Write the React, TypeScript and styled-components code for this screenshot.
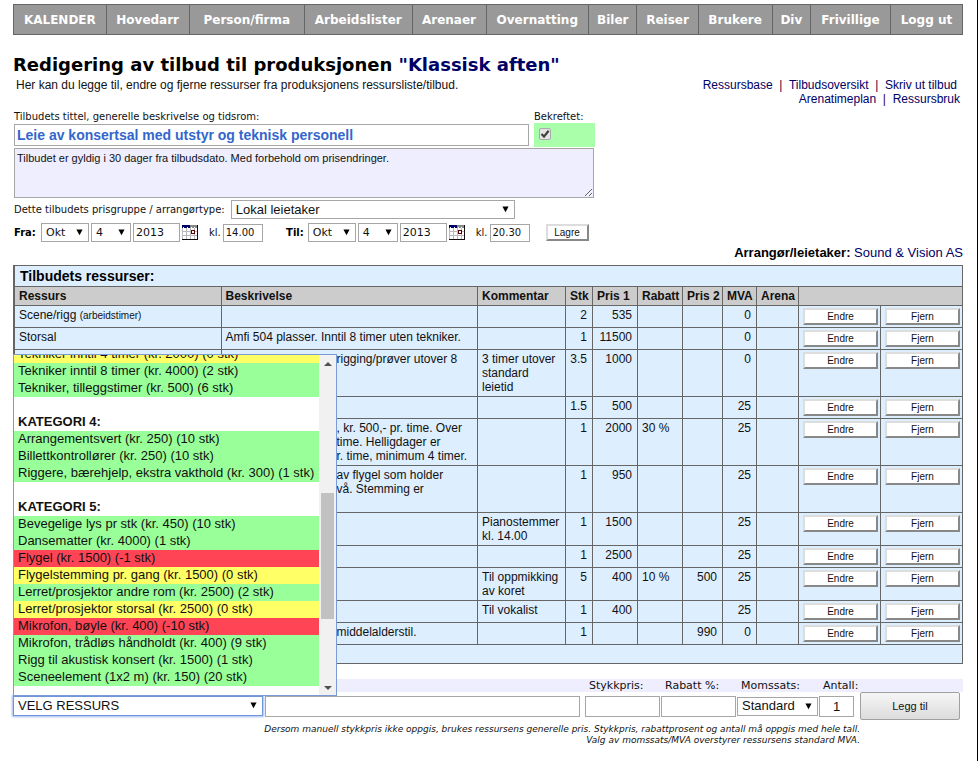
import React from "react";
import styled, { createGlobalStyle, css } from "styled-components";

const SANS = '"Liberation Sans", Arial, sans-serif';
const WIDE = '"DejaVu Sans", Verdana, sans-serif';
const LINE = "#666666";

const GlobalStyle = createGlobalStyle`
  *, *::before, *::after { box-sizing: border-box; }
  html { min-height: 100%; border-right: 1px solid #000; background: #fff; }
  body { margin: 0; font: 12px/14px ${SANS}; color: #111; }
  a { color: #000066; text-decoration: none; }
  input, select, textarea, button { margin: 0; color: #111; border-radius: 0; }
`;

const Page = styled.div`
  padding: 4px 14px 12px 13px;
`;

const Nav = styled.nav`
  display: flex;
  height: 31px;
  border: 1px solid ${LINE};
  background: #999999;
`;

const NavLink = styled.a<{ $share: number }>`
  flex: ${(p) => p.$share} 1 0;
  display: flex;
  align-items: center;
  justify-content: center;
  min-width: 0;
  font: bold 12px/16px ${WIDE};
  color: #fff;
  white-space: nowrap;
  & + & { border-left: 1px solid ${LINE}; }
`;

const Title = styled.h1`
  margin: 18px 0 0;
  font: bold 18px/24px ${WIDE};
  color: #000;
  span { color: #000066; }
`;

const Intro = styled.div`
  display: flex;
  justify-content: space-between;
  padding: 1px 3px 0;
`;

const IntroText = styled.p`
  margin: 0;
`;

const Links = styled.div`
  display: flex;
  flex-direction: column;
  align-items: flex-end;
  color: #330044;
  white-space: pre;
`;

const LinkRow = styled.div<{ $inset?: boolean }>`
  padding-right: ${(p) => (p.$inset ? "3px" : "0")};
`;

const Offer = styled.form`
  padding: 4px 0 0 1px;
`;

const Small = styled.label`
  font: 10px/13px ${WIDE};
  color: #111;
`;

const TitleRow = styled.div`
  display: flex;
  gap: 5px;
`;

const TitleField = styled.div`
  display: flex;
  flex-direction: column;
  width: 515px;
`;

const Confirmed = styled.div`
  display: flex;
  flex-direction: column;
  width: 61px;
`;

const ConfirmedBox = styled.div`
  display: flex;
  height: 24px;
  padding: 5px;
  background: #aaffaa;
`;

const Tick = styled.input`
  appearance: none;
  width: 12px;
  height: 12px;
  border: 1px solid #aaa;
  border-radius: 2px;
  background: #e4e4e4
    url("data:image/svg+xml,%3Csvg xmlns='http://www.w3.org/2000/svg' viewBox='0 0 10 10'%3E%3Cpath d='M1.5 5l2.5 2.6L8.6 1.8' fill='none' stroke='%23404040' stroke-width='2.2'/%3E%3C/svg%3E")
    center / 10px 10px no-repeat;
  &:not(:checked) { background-image: none; }
`;

const field = css`
  border: 1px solid #a6a6a6;
  background: #fff;
  padding: 0 2px;
`;

const TitleInput = styled.input`
  ${field}
  height: 22px;
  margin-top: 1px;
  font: bold 14px/18px ${SANS};
  color: #3366cc;
`;

const Description = styled.textarea`
  ${field}
  display: block;
  width: 580px;
  height: 50px;
  margin-top: 1px;
  background: #eeeeff;
  font: 11px/14px ${SANS};
  padding: 2px;
`;

const FormRow = styled.div`
  display: flex;
  align-items: center;
  margin-top: 2px;
`;

const SelectFrame = styled.div<{ $w: number; $focus?: boolean }>`
  position: relative;
  display: flex;
  width: ${(p) => p.$w}px;
  height: ${(p) => (p.$focus ? 20 : 19)}px;
  border: 1px solid ${(p) => (p.$focus ? "#6f95d8" : "#a6a6a6")};
  box-shadow: ${(p) => (p.$focus ? "0 0 2px 1px #9dbcf0" : "none")};
  background: #fff;
  > svg {
    position: absolute;
    right: 5px;
    top: 5px;
    pointer-events: none;
  }
`;

const Select = styled.select<{ $wide?: boolean }>`
  appearance: none;
  flex: 1;
  min-width: 0;
  border: 0;
  outline: 0;
  padding: 0 4px;
  background: transparent;
  font: ${(p) => (p.$wide ? `11px/16px ${WIDE}` : `13px/16px ${SANS}`)};
`;

const GroupSelect = styled.div`
  margin-left: 6px;
`;

const DateRow = styled.div`
  display: flex;
  align-items: center;
  gap: 2px;
  margin-top: 4px;
  font: 10px/14px ${WIDE};
`;

const DateName = styled.span<{ $w: number }>`
  width: ${(p) => p.$w}px;
  padding-right: 2px;
  font-weight: bold;
  color: #000;
  white-space: nowrap;
  text-align: ${(p) => (p.$w > 30 ? "right" : "left")};
`;

const YearInput = styled.input`
  ${field}
  width: 47px;
  height: 19px;
  font: 11px/15px ${WIDE};
`;

const TimeInput = styled.input`
  ${field}
  width: 40px;
  height: 18px;
  font: 10px/14px ${WIDE};
`;

const TimeName = styled.label`
  padding-left: 9px;
`;

const PlainButton = styled.button`
  display: block;
  width: 100%;
  height: 17px;
  padding: 0;
  border: 2px solid;
  border-color: #dddddd #888888 #888888 #dddddd;
  background: #fff;
  font: 10px/13px ${SANS};
`;

const SaveSlot = styled.div`
  width: 43px;
  margin-left: 14px;
`;

const CalendarButton = styled.button`
  display: flex;
  padding: 0;
  border: 0;
  background: none;
  width: 16px;
  height: 16px;
`;

const Organiser = styled.p`
  margin: 3px 0 4px;
  text-align: right;
  font-size: 13px;
  line-height: 16px;
  b { color: #000; }
`;

const Resources = styled.table`
  width: 100%;
  table-layout: fixed;
  border-collapse: collapse;
  border: 1px solid ${LINE};
  border-left-width: 2px;
  background: #ddeeff;
  td, th {
    border: 1px solid ${LINE};
    padding: 2px 3px 2px 4px;
    text-align: left;
    vertical-align: top;
  }
`;

const Caption = styled.th`
  && {
    height: 21px;
    padding-left: 5px;
    font-size: 14px;
    line-height: 16px;
    color: #000;
  }
`;

const HeadRow = styled.tr`
  background: #cccccc;
  th { height: 19px; white-space: nowrap; padding-right: 0; }
`;

const NumCell = styled.td`
  && { text-align: right; padding-left: 0; padding-right: 5px; }
`;

const ActionCell = styled.td`
  && { padding: 2px; padding-left: 4px; }
`;

const FootCell = styled.td`
  && { height: 19px; }
`;

const Tiny = styled.small`
  font-size: 10px;
`;

const Lead = styled.span`
  display: inline-block;
  width: 111px;
  height: 14px;
  overflow: hidden;
  vertical-align: top;
  white-space: pre;
  text-align: right;
`;

const AddForm = styled.form`
  margin-top: 15px;
`;

const columns = css`
  display: grid;
  grid-template-columns: 251px minmax(0, 1fr) 3px 75px 75px 81px 35px 105px;
  column-gap: 1px;
  padding-right: 3px;
`;

const AddLabels = styled.div`
  ${columns}
  height: 13px;
  background: #eeeeff;
  font: 11px/13px ${WIDE};
  label { white-space: nowrap; padding-left: 4px; }
`;

const AddFields = styled.div`
  ${columns}
  align-items: center;
  height: 27px;
`;

const AddInput = styled.input<{ $gap?: boolean }>`
  ${field}
  width: 100%;
  height: 21px;
  font: 13px/17px ${SANS};
  text-align: ${(p) => (p.$gap ? "center" : "left")};
`;

const AddButton = styled.button`
  height: 28px;
  margin: 0 0 0 5px;
  border: 1px solid #a0a0a0;
  border-radius: 2px;
  background: linear-gradient(#f6f6f6, #dcdcdc);
  font: 11px/14px ${SANS};
`;

const Picker = styled.div`
  position: relative;
`;

const Menu = styled.div`
  position: absolute;
  left: 0;
  bottom: 100%;
  z-index: 2;
  display: flex;
  width: 324px;
  height: 342px;
  border: 1px solid #7a9bd8;
  background: #fff;
`;

const Options = styled.ul`
  flex: 1;
  display: flex;
  flex-direction: column;
  justify-content: flex-end;
  min-width: 0;
  margin: 0;
  padding: 0 0 9px;
  overflow: hidden;
  list-style: none;
`;

const tones = { ok: "#99ff99", out: "#ffff66", over: "#ff4455", none: "#ffffff" };
type Tone = keyof typeof tones;

const Option = styled.li<{ $tone: Tone }>`
  flex: none;
  height: 17px;
  padding-left: 4px;
  background: ${(p) => tones[p.$tone]};
  font-size: 13px;
  line-height: 16px;
  font-weight: ${(p) => (p.$tone === "none" ? "bold" : "normal")};
  white-space: nowrap;
`;

const ScrollTrack = styled.div`
  display: flex;
  flex-direction: column;
  align-items: center;
  width: 17px;
  padding: 7px 1px 5px;
  background: #f1f1f1;
`;

const ScrollSpace = styled.div<{ $share: number; $thumb?: boolean }>`
  flex: ${(p) => p.$share} 1 0;
  width: 13px;
  background: ${(p) => (p.$thumb ? "#c1c1c1" : "transparent")};
`;

const Hints = styled.p`
  width: 847px;
  max-width: 100%;
  margin: 5px 0 0;
  text-align: right;
  font: italic 9px/11px ${WIDE};
`;

const Arrow = () => (
  <svg width="7" height="7" viewBox="0 0 8 8" aria-hidden="true">
    <path d="M0.5 0.5h7L4 7z" fill="#000" />
  </svg>
);

const ScrollArrow = ({ down }: { down?: boolean }) => (
  <svg width="8" height="4" viewBox="0 0 8 4" aria-hidden="true">
    <path d={down ? "M0 0h8L4 4z" : "M0 4h8L4 0z"} fill="#505050" />
  </svg>
);

const CalendarIcon = () => (
  <svg width="16" height="16" viewBox="0 0 16 16" shapeRendering="crispEdges" aria-hidden="true">
    <path d="M0 0h16v15H0z" fill="#fff" />
    <path d="M0.5 2v12M4.5 2v12M8.5 2v12M12.5 2v12M0 6.5h15M0 10.5h15" stroke="#bbb" fill="none" />
    <path d="M0 0h8v3H0z" fill="#000066" />
    <path d="M8 0h7v3H8z" fill="#888" />
    <path d="M1 2h1v1H1zM5 2h1v1H5zM9 2h1v1H9zM12 2h1v1h-1z" fill="#fff" />
    <path d="M9.5 5.5h3v3h-3z" fill="#fff" stroke="#660000" />
    <path d="M0 14.5h16M15.5 0v15" stroke="#111" fill="none" />
  </svg>
);

const menuItems: [string, number][] = [
  ["KALENDER", 93], ["Hovedarr", 83], ["Person/firma", 116], ["Arbeidslister", 108],
  ["Arenaer", 74], ["Overnatting", 103], ["Biler", 48], ["Reiser", 61],
  ["Brukere", 74], ["Div", 38], ["Frivillige", 80], ["Logg ut", 72],
];

const options: [string, Tone][] = [
  ["Tekniker inntil 4 timer (kr. 2000) (0 stk)", "out"],
  ["Tekniker inntil 8 timer (kr. 4000) (2 stk)", "ok"],
  ["Tekniker, tilleggstimer (kr. 500) (6 stk)", "ok"],
  ["", "none"],
  ["KATEGORI 4:", "none"],
  ["Arrangementsvert (kr. 250) (10 stk)", "ok"],
  ["Billettkontrollører (kr. 250) (10 stk)", "ok"],
  ["Riggere, bærehjelp, ekstra vakthold (kr. 300) (1 stk)", "ok"],
  ["", "none"],
  ["KATEGORI 5:", "none"],
  ["Bevegelige lys pr stk (kr. 450) (10 stk)", "ok"],
  ["Dansematter (kr. 4000) (1 stk)", "ok"],
  ["Flygel (kr. 1500) (-1 stk)", "over"],
  ["Flygelstemming pr. gang (kr. 1500) (0 stk)", "out"],
  ["Lerret/prosjektor andre rom (kr. 2500) (2 stk)", "ok"],
  ["Lerret/prosjektor storsal (kr. 2500) (0 stk)", "out"],
  ["Mikrofon, bøyle (kr. 400) (-10 stk)", "over"],
  ["Mikrofon, trådløs håndholdt (kr. 400) (9 stk)", "ok"],
  ["Rigg til akustisk konsert (kr. 1500) (1 stk)", "ok"],
  ["Sceneelement (1x2 m) (kr. 150) (20 stk)", "ok"],
];

type Line = [lead: string, rest: string];
type Row = {
  name?: string; note?: string; text?: string; lines?: Line[]; comment?: string;
  qty: string; p1?: string; off?: string; p2?: string; vat: string;
};

const rows: Row[] = [
  { name: "Scene/rigg", note: "(arbeidstimer)", qty: "2", p1: "535", vat: "0" },
  { name: "Storsal", text: "Amfi 504 plasser. Inntil 8 timer uten tekniker.", qty: "1", p1: "11500", vat: "0" },
  { lines: [["", "rigging/prøver utover 8"]], comment: "3 timer utover standard leietid", qty: "3.5", p1: "1000", vat: "0" },
  { qty: "1.5", p1: "500", vat: "25" },
  { lines: [["timer", ", kr. 500,- pr. time. Over"], ["pr. ", "time. Helligdager er"], ["p", "r. time, minimum 4 timer."]], qty: "1", p1: "2000", off: "30 %", vat: "25" },
  { lines: [["", "av flygel som holder"], ["ni", "vå. Stemming er"], ["", " "]], qty: "1", p1: "950", vat: "25" },
  { comment: "Pianostemmer kl. 14.00", qty: "1", p1: "1500", vat: "25" },
  { qty: "1", p1: "2500", vat: "25" },
  { comment: "Til oppmikking av koret", qty: "5", p1: "400", off: "10 %", p2: "500", vat: "25" },
  { comment: "Til vokalist", qty: "1", p1: "400", vat: "25" },
  { lines: [["i ", "middelalderstil."]], qty: "1", p2: "990", vat: "0" },
];

function DateFields({ id, name, time, w }: { id: string; name: string; time: string; w: number }) {
  return (
    <>
      <DateName $w={w}>{name}</DateName>
      <SelectFrame $w={48}>
        <Select $wide aria-label={`${name} måned`}><option>Okt</option></Select>
        <Arrow />
      </SelectFrame>
      <SelectFrame $w={40}>
        <Select $wide aria-label={`${name} dag`}><option>4</option></Select>
        <Arrow />
      </SelectFrame>
      <YearInput aria-label={`${name} år`} defaultValue="2013" />
      <CalendarButton type="button" aria-label={`${name} kalender`}><CalendarIcon /></CalendarButton>
      <TimeName htmlFor={id}>kl.</TimeName>
      <TimeInput id={id} defaultValue={time} />
    </>
  );
}

export default function App() {
  return (
    <>
      <GlobalStyle />
      <Page>
        <Nav>
          {menuItems.map(([label, share]) => (
            <NavLink key={label} href="#" $share={share}>{label}</NavLink>
          ))}
        </Nav>

        <Title>Redigering av tilbud til produksjonen <span>"Klassisk aften"</span></Title>
        <Intro>
          <IntroText>Her kan du legge til, endre og fjerne ressurser fra produksjonens ressursliste/tilbud.</IntroText>
          <Links>
            <LinkRow $inset>
              <a href="#">Ressursbase</a>{"  |  "}<a href="#">Tilbudsoversikt</a>{"  |  "}<a href="#">Skriv ut tilbud</a>
            </LinkRow>
            <LinkRow><a href="#">Arenatimeplan</a>{"  |  "}<a href="#">Ressursbruk</a></LinkRow>
          </Links>
        </Intro>

        <Offer>
          <TitleRow>
            <TitleField>
              <Small htmlFor="title">Tilbudets tittel, generelle beskrivelse og tidsrom:</Small>
              <TitleInput id="title" defaultValue="Leie av konsertsal med utstyr og teknisk personell" />
            </TitleField>
            <Confirmed>
              <Small htmlFor="confirmed">Bekreftet:</Small>
              <ConfirmedBox><Tick id="confirmed" type="checkbox" defaultChecked /></ConfirmedBox>
            </Confirmed>
          </TitleRow>
          <Description
            aria-label="Beskrivelse av tilbudet"
            defaultValue="Tilbudet er gyldig i 30 dager fra tilbudsdato. Med forbehold om prisendringer."
          />
          <FormRow>
            <Small htmlFor="group">Dette tilbudets prisgruppe / arrangørtype:</Small>
            <GroupSelect>
              <SelectFrame $w={284}>
                <Select id="group"><option>Lokal leietaker</option></Select>
                <Arrow />
              </SelectFrame>
            </GroupSelect>
          </FormRow>
          <DateRow>
            <DateFields id="from-time" name="Fra:" time="14.00" w={25} />
            <DateFields id="to-time" name="Til:" time="20.30" w={41} />
            <SaveSlot><PlainButton type="button">Lagre</PlainButton></SaveSlot>
          </DateRow>
        </Offer>

        <Organiser><b>Arrangør/leietaker:</b> <a href="#">Sound &amp; Vision AS</a></Organiser>

        <Resources>
          <colgroup>
            <col width="207" /><col /><col width="88" /><col width="27" /><col width="45" /><col width="45" />
            <col width="40" /><col width="34" /><col width="42" /><col width="82" /><col width="82" />
          </colgroup>
          <thead>
            <tr><Caption colSpan={11}>Tilbudets ressurser:</Caption></tr>
            <HeadRow>
              <th>Ressurs</th><th>Beskrivelse</th><th>Kommentar</th><th>Stk</th><th>Pris 1</th><th>Rabatt</th>
              <th>Pris 2</th><th>MVA</th><th>Arena</th><th colSpan={2} />
            </HeadRow>
          </thead>
          <tbody>
            {rows.map((r, i) => (
              <tr key={i}>
                <td>{r.name} {r.note && <Tiny>{r.note}</Tiny>}</td>
                <td>
                  {r.text}
                  {r.lines?.map(([lead, rest], n) => (
                    <div key={n}><Lead>{lead}</Lead>{rest}</div>
                  ))}
                </td>
                <td>{r.comment}</td>
                <NumCell>{r.qty}</NumCell>
                <NumCell>{r.p1}</NumCell>
                <td>{r.off}</td>
                <NumCell>{r.p2}</NumCell>
                <NumCell>{r.vat}</NumCell>
                <td />
                <ActionCell><PlainButton type="button">Endre</PlainButton></ActionCell>
                <ActionCell><PlainButton type="button">Fjern</PlainButton></ActionCell>
              </tr>
            ))}
            <tr><FootCell colSpan={11} /></tr>
          </tbody>
        </Resources>

        <AddForm>
          <AddLabels>
            <span />
            <label htmlFor="text">Beskrivelse:</label>
            <span />
            <label htmlFor="price">Stykkpris:</label>
            <label htmlFor="discount">Rabatt %:</label>
            <label htmlFor="vat">Momssats:</label>
            <label htmlFor="count">Antall:</label>
          </AddLabels>
          <AddFields>
            <Picker>
              <SelectFrame $w={250} $focus>
                <Select aria-label="Ressurs"><option>VELG RESSURS</option></Select>
                <Arrow />
              </SelectFrame>
              <Menu>
                <Options role="listbox" aria-label="Ressurser">
                  {options.map(([label, tone], i) => (
                    <Option key={i} role="option" $tone={tone}>{label}</Option>
                  ))}
                </Options>
                <ScrollTrack>
                  <ScrollArrow />
                  <ScrollSpace $share={125} />
                  <ScrollSpace $share={125} $thumb />
                  <ScrollSpace $share={66} />
                  <ScrollArrow down />
                </ScrollTrack>
              </Menu>
            </Picker>
            <AddInput id="text" />
            <span />
            <AddInput id="price" />
            <AddInput id="discount" />
            <SelectFrame $w={81}>
              <Select id="vat"><option>Standard</option></Select>
              <Arrow />
            </SelectFrame>
            <AddInput id="count" $gap defaultValue="1" />
            <AddButton type="button">Legg til</AddButton>
          </AddFields>
          <Hints>
            Dersom manuell stykkpris ikke oppgis, brukes ressursens generelle pris. Stykkpris, rabattprosent og antall må oppgis med hele tall.
            <br />
            Valg av momssats/MVA overstyrer ressursens standard MVA.
          </Hints>
        </AddForm>
      </Page>
    </>
  );
}
